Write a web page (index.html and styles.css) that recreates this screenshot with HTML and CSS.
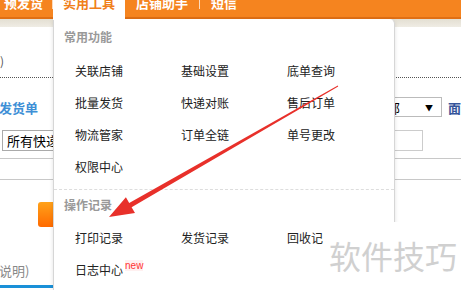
FILE: index.html
```html
<!DOCTYPE html>
<html lang="zh-CN">

<head>
    <meta charset="UTF-8">
    <title>实用工具</title>
    <link rel="stylesheet" href="styles.css">
</head>

<body>
    <div class="topbar">
        <nav class="nav">
            <a class="tab tab-first">预发货</a>
            <span class="sep"></span>
            <a class="tab active">实用工具</a>
            <a class="tab">店铺助手</a>
            <span class="sep"></span>
            <a class="tab">短信</a>
        </nav>
    </div>
    <div class="subbar"></div>

    <main class="page">
        <div class="row row-note">
            <span class="paren">)</span>
        </div>
        <div class="dotted"></div>

        <div class="row row-title">
            <span class="title-link">发货单</span>
            <div class="right-group">
                <div class="fake-select"><span>全部</span><span class="caret">▼</span></div>
                <span class="blue-link">面</span>
            </div>
        </div>

        <div class="row row-inputs">
            <div class="fake-select left-select"><span>所有快递</span></div>
            <div class="right-group">
                <div class="fake-input"></div>
            </div>
        </div>

        <div class="line line-a"></div>
        <div class="line line-b"></div>

        <div class="row row-button">
            <span class="orange-btn"></span>
        </div>

        <div class="row row-help">
            <span class="help-text">说明)</span>
        </div>
        <div class="blue-bar"></div>
    </main>

    <!-- 下拉菜单：实用工具 -->
    <div class="menu">
        <div class="menu-title">常用功能</div>
        <ul class="menu-grid">
            <li>关联店铺</li>
            <li>基础设置</li>
            <li>底单查询</li>
            <li>批量发货</li>
            <li>快递对账</li>
            <li>售后订单</li>
            <li>物流管家</li>
            <li>订单全链</li>
            <li>单号更改</li>
            <li>权限中心</li>
        </ul>
        <div class="menu-divider"></div>
        <div class="menu-title menu-title-2">操作记录</div>
        <ul class="menu-grid menu-grid-2">
            <li>打印记录</li>
            <li>发货记录</li>
            <li class="cut-item">回收记</li>
            <li>日志中心<sup class="badge-new">new</sup></li>
        </ul>
    </div>

    <svg class="arrow" width="461" height="290" viewBox="0 0 461 290">
        <polygon fill="#e8302a"
            points="109,217 125.9,197.2 129.2,203 337.8,85.6 338.2,86.4 131.6,207.3 135,213.1" />
    </svg>

    <div class="watermark">软件技巧</div>
</body>

</html>
```

FILE: styles.css
```css
body {
    margin: 0;
    width: 461px;
    height: 290px;
    overflow: hidden;
    position: relative;
    background-color: #fff;
    font-family: "Noto Sans CJK SC", "Noto Sans", sans-serif;
    font-size: 12px;
    color: #333;
}

/* Barra naranja superior */
.topbar {
    height: 17px;
    background-color: #f5841f;
    border-bottom: 2px solid #e06f14;
}

.nav {
    display: flex;
    height: 17px;
    padding-left: 4px;
}

.tab {
    display: block;
    height: 17px;
    padding: 0 11px;
    line-height: 5px;
    font-size: 13px;
    font-weight: bold;
    color: #fff;
}

.tab-first {
    padding: 0 9px 0 0;
}

.tab.active {
    height: 20px;
    padding: 0 10px;
    background-color: #fff;
    color: #f0801a;
    position: relative;
    z-index: 2;
}

.sep {
    width: 1px;
    height: 9px;
    background-color: rgba(255, 255, 255, 0.7);
}

.subbar {
    height: 8px;
    background: linear-gradient(#e3dfd2, #efece4);
}

/* Contenido de fondo */
.page {
    width: 461px;
}

.row {
    display: grid;
    grid-template-columns: 53px 342px 66px;
    align-items: center;
}

.row-note {
    margin-top: 24px;
    height: 18px;
}

.paren {
    color: #555;
    font-size: 12px;
}

.dotted {
    margin-top: 8px;
    border-top: 1px dotted #555;
}

.row-title {
    margin-top: 19px;
    height: 20px;
}

.title-link {
    margin-left: -1px;
    color: #3d8fd6;
    font-weight: bold;
    font-size: 13px;
    white-space: nowrap;
}

.right-group {
    grid-column: 3;
    display: flex;
    align-items: center;
}

.fake-select {
    box-sizing: border-box;
    display: flex;
    justify-content: space-between;
    align-items: center;
    width: 107px;
    height: 20px;
    margin-left: -60px;
    padding: 0 8px 0 38px;
    border: 1px solid #bbb;
    background-color: #fff;
    font-size: 13px;
    color: #000;
}

.caret {
    font-size: 8px;
}

.blue-link {
    margin-left: 6px;
    color: #36559b;
    font-size: 13px;
    font-weight: bold;
}

.row-inputs {
    margin-top: 13px;
    height: 21px;
}

.left-select {
    height: 21px;
    width: 100px;
    margin-left: 2px;
    padding: 0 0 0 4px;
    border-color: #aaa;
}

.fake-input {
    box-sizing: border-box;
    width: 83px;
    height: 21px;
    margin-left: -55px;
    border: 1px solid #ccc;
}

.line {
    border-top: 1px solid #c8c8c8;
}

.line-a {
    margin-top: 7px;
}

.line-b {
    margin-top: 20px;
}

.row-button {
    margin-top: 22px;
    height: 25px;
}

.orange-btn {
    justify-self: end;
    width: 15px;
    height: 25px;
    border-radius: 3px 0 0 3px;
    background: linear-gradient(#ffa21a, #ff6a00);
}

.row-help {
    margin-top: 34px;
    height: 18px;
}

.help-text {
    margin-left: -1px;
    color: #888;
    font-size: 13px;
    white-space: nowrap;
}

.blue-bar {
    margin-top: 6px;
    height: 3px;
    background-color: #1a90d8;
}

/* Menú desplegable */
.menu {
    position: absolute;
    top: 19px;
    left: 53px;
    bottom: 0;
    width: 340px;
    background-color: #fff;
    border-left: 1px solid #d6d6d6;
    border-right: 1px solid #d6d6d6;
    border-radius: 0 5px 0 0;
    box-shadow: 0 1px 4px rgba(0, 0, 0, 0.12);
    z-index: 1;
}

.menu-title {
    padding: 5px 0 0 10px;
    line-height: 26px;
    font-size: 12px;
    font-weight: bold;
    color: #999;
}

.menu-title-2 {
    padding-top: 2px;
}

.menu-grid {
    display: grid;
    grid-template-columns: 106px 106px 106px;
    margin: 5px 0 0;
    padding: 0 0 0 21px;
    list-style: none;
}

.menu-grid li {
    line-height: 32px;
    height: 32px;
    color: #222;
    white-space: nowrap;
}

.menu-grid-2 {
    margin-top: 4px;
}

.menu-divider {
    margin-top: 6px;
    border-top: 1px dashed #ddd;
}

.badge-new {
    margin-left: 2px;
    font-family: "Liberation Sans", Arial, sans-serif;
    font-size: 10px;
    line-height: 1;
    color: #ff3333;
    background-color: #fff0f0;
    vertical-align: 6px;
}

.arrow {
    position: absolute;
    top: 0;
    left: 0;
    z-index: 3;
}

.watermark {
    position: absolute;
    left: 323px;
    top: 222px;
    right: 0;
    bottom: 0;
    padding-left: 6px;
    background-color: #fff;
    color: #d0d0d0;
    font-size: 32px;
    line-height: 66px;
    z-index: 4;
    white-space: nowrap;
}
```
